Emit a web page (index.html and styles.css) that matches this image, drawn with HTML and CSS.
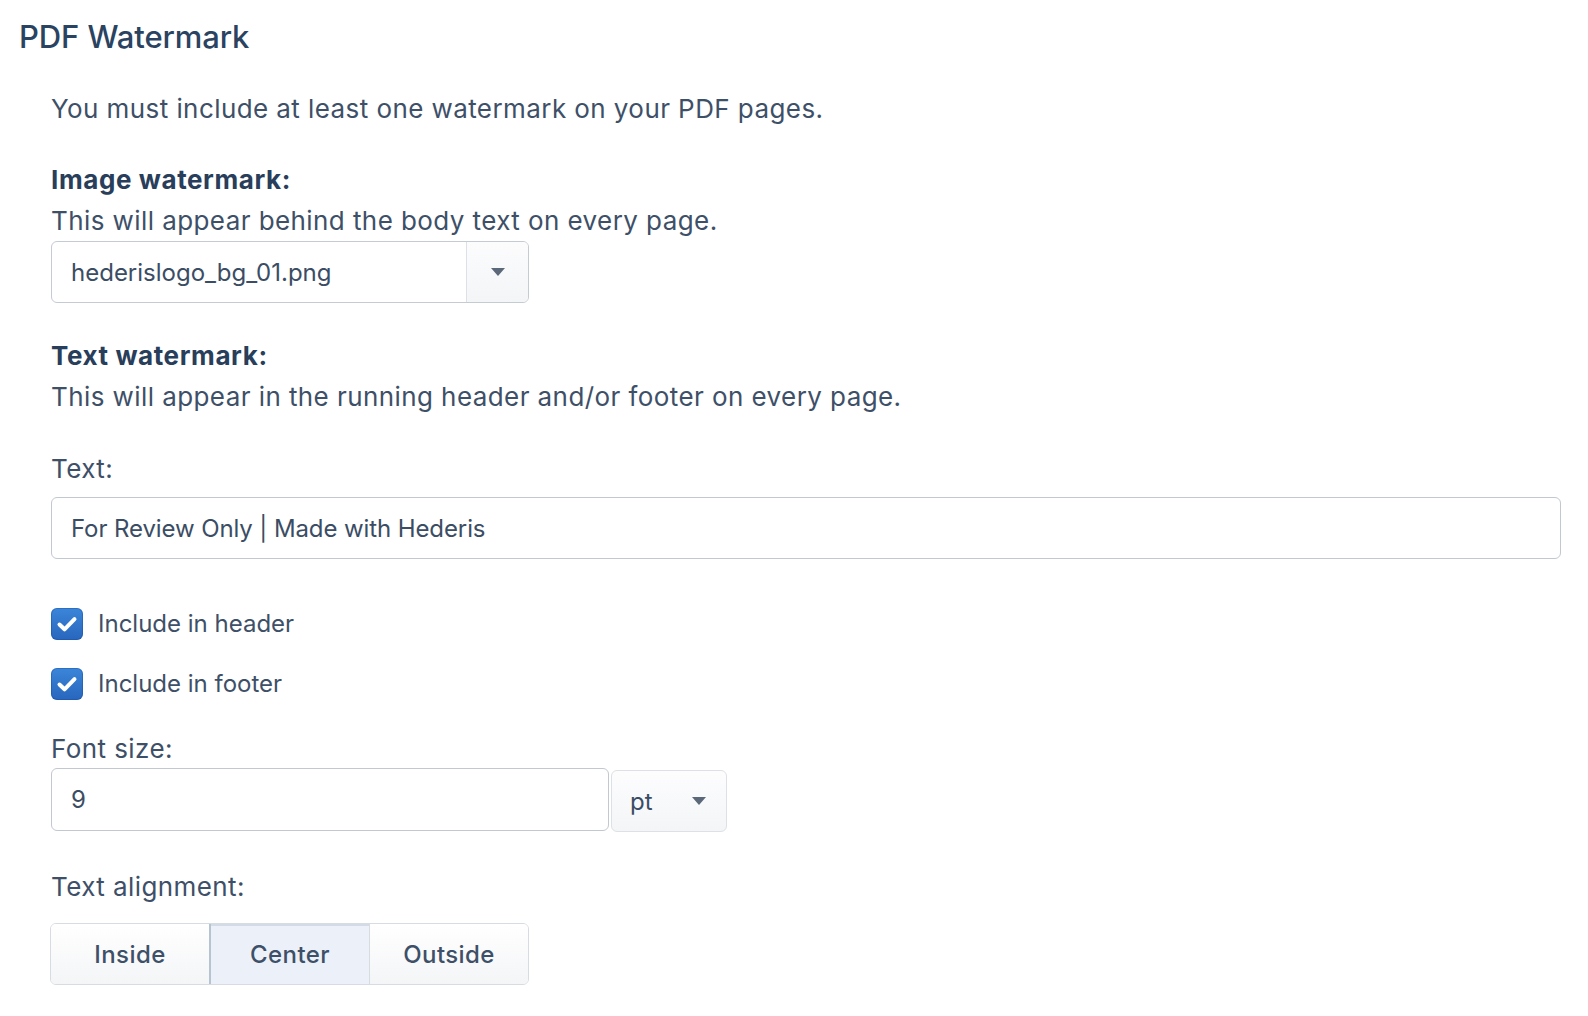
FILE: index.html
```html
<!DOCTYPE html>
<html lang="en">
<head>
<meta charset="utf-8">
<title>PDF Watermark</title>
<link rel="stylesheet" href="styles.css">
</head>
<body>
<div class="page">
  <h1 class="title">PDF Watermark</h1>
  <div class="content">
    <p class="intro">You must include at least one watermark on your PDF pages.</p>

    <section class="group group-image">
      <h2 class="group-label">Image watermark:</h2>
      <p class="desc">This will appear behind the body text on every page.</p>
      <div class="select select-image">
        <span class="select-value">hederislogo_bg_01.png</span>
        <span class="select-btn">
          <svg class="caret" width="14" height="8" viewBox="0 0 14 8"><path d="M0 0 H14 L7 8 Z" fill="#5b6879"/></svg>
        </span>
      </div>
    </section>

    <section class="group group-text">
      <h2 class="group-label">Text watermark:</h2>
      <p class="desc">This will appear in the running header and/or footer on every page.</p>

      <div class="field-label label-text">Text:</div>
      <div class="input input-text">For Review Only | Made with Hederis</div>

      <div class="check-row check-first">
        <span class="checkbox">
          <svg width="32" height="32" viewBox="0 0 32 32"><path d="M8.5 16.5 L13.5 21.3 L23.5 11.2" fill="none" stroke="#fff" stroke-width="4" stroke-linecap="round" stroke-linejoin="round"/></svg>
        </span>
        <span class="check-label">Include in header</span>
      </div>
      <div class="check-row check-second">
        <span class="checkbox">
          <svg width="32" height="32" viewBox="0 0 32 32"><path d="M8.5 16.5 L13.5 21.3 L23.5 11.2" fill="none" stroke="#fff" stroke-width="4" stroke-linecap="round" stroke-linejoin="round"/></svg>
        </span>
        <span class="check-label">Include in footer</span>
      </div>

      <div class="field-label label-size">Font size:</div>
      <div class="size-row">
        <div class="input input-size">9</div>
        <div class="unit-select">
          <span class="unit-value">pt</span>
          <svg class="caret" width="14" height="8" viewBox="0 0 14 8"><path d="M0 0 H14 L7 8 Z" fill="#5b6879"/></svg>
        </div>
      </div>

      <div class="field-label label-align">Text alignment:</div>
      <div class="segmented">
        <button class="seg">Inside</button>
        <button class="seg seg-active">Center</button>
        <button class="seg">Outside</button>
      </div>
    </section>
  </div>
</div>
</body>
</html>
```

FILE: styles.css
```css
* {
  box-sizing: border-box;
}

html, body {
  margin: 0;
  padding: 0;
  background: #ffffff;
}

body {
  font-family: Inter, "Noto Sans", "Liberation Sans", sans-serif;
  font-size: 26px;
  line-height: 39px;
  letter-spacing: 0.42px;
  color: #3e5068;
}

.page {
  padding: 18px 27px 0 19px;
}

.title {
  margin: 0;
  font-size: 31px;
  line-height: 37px;
  font-weight: 500;
  color: #2a4361;
  letter-spacing: -0.1px;
}

.content {
  padding-left: 32px;
}

.intro {
  margin: 34px 0 0 0;
}

.group-label {
  margin: 0 0 2px 0;
  font-size: 26px;
  line-height: 39px;
  font-weight: 700;
  letter-spacing: 0.6px;
  color: #283e5a;
}

.group-image {
  margin-top: 32px;
}

.group-text {
  margin-top: 33px;
}

.desc {
  margin: 0;
}

.select {
  display: flex;
  height: 62px;
  border: 1.5px solid #c5cbd3;
  border-radius: 6px;
  background: #ffffff;
}

.select-image {
  margin-top: 1px;
  width: 478px;
}

.select-value {
  flex: 1;
  display: flex;
  align-items: center;
  padding-left: 19px;
  font-size: 24px;
  letter-spacing: 0;
  color: #3b4d64;
}

.select-btn {
  width: 62px;
  display: flex;
  align-items: center;
  justify-content: center;
  border-left: 1.5px solid #dde1e6;
  background: linear-gradient(#fcfcfd, #f3f5f7);
  border-radius: 0 5px 5px 0;
}

.field-label {
  line-height: 39px;
}

.label-text {
  margin-top: 33px;
}

.input {
  display: flex;
  align-items: center;
  height: 62px;
  padding-left: 19px;
  border: 1.5px solid #c2c8d0;
  border-radius: 6px;
  background: #ffffff;
  font-size: 24px;
  letter-spacing: -0.1px;
  color: #3b4d64;
}

.input-text {
  margin-top: 9px;
}

.check-row {
  display: flex;
  align-items: center;
  height: 32px;
}

.check-first {
  margin-top: 49px;
}

.check-second {
  margin-top: 28px;
}

.checkbox {
  width: 32px;
  height: 32px;
  border-radius: 6px;
  background: linear-gradient(#3b86d9, #2866bd);
  box-shadow: inset 0 0 0 1px rgba(20, 70, 150, 0.35);
  display: flex;
  align-items: center;
  justify-content: center;
}

.check-label {
  margin-left: 15px;
  font-size: 24px;
  line-height: 32px;
  letter-spacing: 0;
}

.label-size {
  margin-top: 29px;
}

.size-row {
  display: flex;
  align-items: flex-start;
  gap: 2px;
}

.input-size {
  width: 558px;
  height: 63px;
  font-size: 24px;
}

.unit-select {
  margin-top: 2px;
  width: 116px;
  height: 62px;
  display: flex;
  align-items: center;
  justify-content: space-between;
  padding: 0 20px 0 18px;
  border: 1.5px solid #dde1e6;
  border-radius: 6px;
  background: linear-gradient(#fdfdfe, #f3f5f7);
  font-size: 24px;
  letter-spacing: 0;
  color: #3b4d64;
}

.label-align {
  margin-top: 35px;
}

.segmented {
  margin-top: 17px;
  margin-left: -1px;
  display: flex;
  width: 479px;
  height: 62px;
  border: 1.5px solid #d7dce2;
  border-radius: 6px;
  overflow: hidden;
}

.seg {
  flex: 1;
  margin: 0;
  padding: 0;
  border: none;
  border-left: 1.5px solid #d7dce2;
  background: linear-gradient(#ffffff, #f4f5f7);
  font-family: Inter, "Noto Sans", sans-serif;
  font-size: 24px;
  font-weight: 450;
  letter-spacing: 0.4px;
  color: #3e5068;
}

.seg:first-child {
  border-left: none;
}

.seg-active {
  background: #ecf1f9;
  border-left: 2px solid #b8c3d0;
  box-shadow: inset 0 2px 0 #d3dbe6;
}
```
